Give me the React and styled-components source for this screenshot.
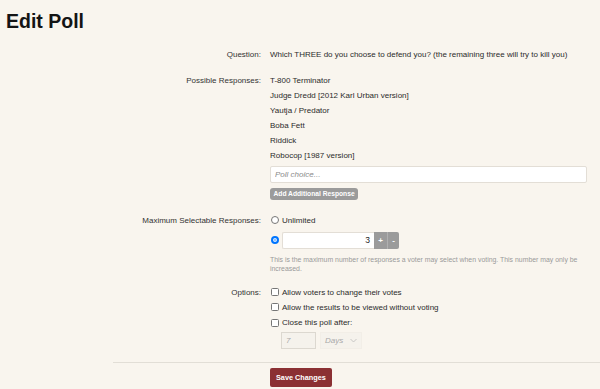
import React from "react";
import styled, { createGlobalStyle } from "styled-components";

const Global = createGlobalStyle`
  html, body { margin: 0; padding: 0; background: #f9f5ee; }
  body { font-family: "Liberation Sans", Arial, sans-serif; color: #2b2b2b; }
  * { box-sizing: border-box; }
`;

const Page = styled.div`
  width: 600px;
  height: 389px;
  overflow: hidden;
  background: #f9f5ee;
`;

const Title = styled.h1`
  margin: 0;
  padding: 9px 0 0 6px;
  font-size: 19.5px;
  line-height: 24px;
  font-weight: bold;
  color: #141414;
`;

const Form = styled.form`
  margin-top: 14px;
  padding-right: 13px;
  font-size: 8px;
`;

const Row = styled.div`
  display: grid;
  grid-template-columns: 261px 1fr;
  column-gap: 9px;
  margin-top: ${(p) => p.$mt || 0}px;
`;

const Label = styled.div`
  text-align: right;
  line-height: 15px;
  color: #333;
`;

const Values = styled.div`
  display: flex;
  flex-direction: column;
`;

const Line = styled.div`
  line-height: 15px;
  color: #2b2b2b;
`;

const TextInput = styled.input`
  width: 100%;
  height: 17px;
  margin-top: 3px;
  border: 1px solid #e3ded6;
  border-radius: 2px;
  background: #fff;
  font-family: inherit;
  font-size: 8px;
  padding: 0 4px;
  color: #333;
  &::placeholder { color: #8a8a8a; font-style: italic; }
`;

const SmallButton = styled.button`
  align-self: flex-start;
  margin-top: 5px;
  height: 12px;
  padding: 0 3.5px;
  border: none;
  border-radius: 3px;
  background: #9b9b9b;
  color: #fff;
  font-family: inherit;
  font-weight: bold;
  font-size: 6.7px;
  line-height: 12px;
`;

const ChoiceLine = styled.label`
  display: flex;
  align-items: center;
  line-height: 15px;
  height: ${(p) => p.$h || 15}px;
  margin-top: ${(p) => p.$mt || 0}px;
  color: #2b2b2b;
`;

const Radio = styled.span`
  width: 8px;
  height: 8px;
  margin: 0 3px 0 1px;
  border-radius: 50%;
  flex: none;
  border: ${(p) => (p.$checked ? "2px solid #0075ff" : "1px solid #767676")};
  background: ${(p) => (p.$checked ? "#fff" : "#fff")};
  box-shadow: ${(p) => (p.$checked ? "inset 0 0 0 1.2px #fff, inset 0 0 0 4px #0075ff" : "none")};
`;

const Check = styled.span`
  width: 8px;
  height: 8px;
  margin: 0 3px 0 1px;
  border-radius: 1.5px;
  border: 1px solid #767676;
  background: #fff;
  flex: none;
`;

const Spinner = styled.div`
  display: flex;
  align-items: stretch;
  height: 17px;
`;

const NumberBox = styled.div`
  width: 92px;
  height: 17px;
  border: 1px solid #e3ded6;
  border-right: none;
  border-radius: 2px 0 0 2px;
  background: #fff;
  font-size: 8.5px;
  line-height: 15px;
  text-align: right;
  padding-right: 4px;
  color: #222;
`;

const StepButton = styled.span`
  width: ${(p) => p.$w}px;
  background: #9b9b9b;
  color: #fff;
  font-weight: bold;
  font-size: 8px;
  line-height: 17px;
  text-align: center;
  border-left: ${(p) => (p.$sep ? "1px solid #b0b0b0" : "none")};
  border-radius: ${(p) => (p.$last ? "0 2px 2px 0" : "0")};
`;

const Help = styled.div`
  margin-top: 6px;
  font-size: 6.9px;
  line-height: 9px;
  color: #9a9a9a;
  padding-right: 2px;
`;

const Inline = styled.div`
  display: flex;
  gap: 4px;
  margin-top: 1.5px;
  padding-left: 11px;
`;

const DisabledBox = styled.div`
  width: ${(p) => p.$w}px;
  height: 17px;
  border: 1px solid ${(p) => (p.$border ? "#dcd8d0" : "#f2eee7")};
  background: ${(p) => (p.$border ? "#f5f2ec" : "#f5f2ec")};
  color: #a8a8a8;
  font-style: italic;
  font-size: 8px;
  line-height: 15px;
  padding-left: 4px;
  display: flex;
  align-items: center;
  justify-content: space-between;
  padding-right: 4px;
`;

const Divider = styled.hr`
  margin: 13px 0 0 113px;
  border: none;
  border-top: 1px solid #e2ded6;
  height: 0;
`;

const SaveButton = styled.button`
  margin: 5px 0 0 270px;
  height: 19px;
  padding: 0 6px;
  border: none;
  border-radius: 2px;
  background: #8b3033;
  color: #fff;
  font-family: "Liberation Sans", Arial, sans-serif;
  font-weight: bold;
  font-size: 7.3px;
  display: block;
`;

const responses = [
  "T-800 Terminator",
  "Judge Dredd [2012 Karl Urban version]",
  "Yautja / Predator",
  "Boba Fett",
  "Riddick",
  "Robocop [1987 version]",
];

const Chevron = () => (
  <svg width="7" height="5" viewBox="0 0 7 5" fill="none">
    <path d="M0.5 1 L3.5 4 L6.5 1" stroke="#bcbcbc" strokeWidth="0.8" />
  </svg>
);

export default function App() {
  return (
    <Page>
      <Global />
      <Title>Edit Poll</Title>
      <Form onSubmit={(e) => e.preventDefault()}>
        <Row>
          <Label>Question:</Label>
          <Values>
            <Line>Which THREE do you choose to defend you? (the remaining three will try to kill you)</Line>
          </Values>
        </Row>
        <Row $mt={10.5}>
          <Label>Possible Responses:</Label>
          <Values>
            {responses.map((r) => (
              <Line key={r}>{r}</Line>
            ))}
            <TextInput placeholder="Poll choice..." />
            <SmallButton type="button">Add Additional Response</SmallButton>
          </Values>
        </Row>
        <Row $mt={13}>
          <Label>Maximum Selectable Responses:</Label>
          <Values>
            <ChoiceLine>
              <Radio />
              Unlimited
            </ChoiceLine>
            <ChoiceLine $mt={4} $h={17}>
              <Radio $checked />
              <Spinner>
                <NumberBox>3</NumberBox>
                <StepButton $w={13}>+</StepButton>
                <StepButton $w={12} $sep $last>-</StepButton>
              </Spinner>
            </ChoiceLine>
            <Help>
              This is the maximum number of responses a voter may select when voting. This number may only be increased.
            </Help>
          </Values>
        </Row>
        <Row $mt={12}>
          <Label>Options:</Label>
          <Values>
            <ChoiceLine>
              <Check />
              Allow voters to change their votes
            </ChoiceLine>
            <ChoiceLine $h={15.5}>
              <Check />
              Allow the results to be viewed without voting
            </ChoiceLine>
            <ChoiceLine $h={15.5}>
              <Check />
              Close this poll after:
            </ChoiceLine>
            <Inline>
              <DisabledBox $w={35} $border>7</DisabledBox>
              <DisabledBox $w={42}>
                Days
                <Chevron />
              </DisabledBox>
            </Inline>
          </Values>
        </Row>
      </Form>
      <Divider />
      <SaveButton type="button">Save Changes</SaveButton>
    </Page>
  );
}
